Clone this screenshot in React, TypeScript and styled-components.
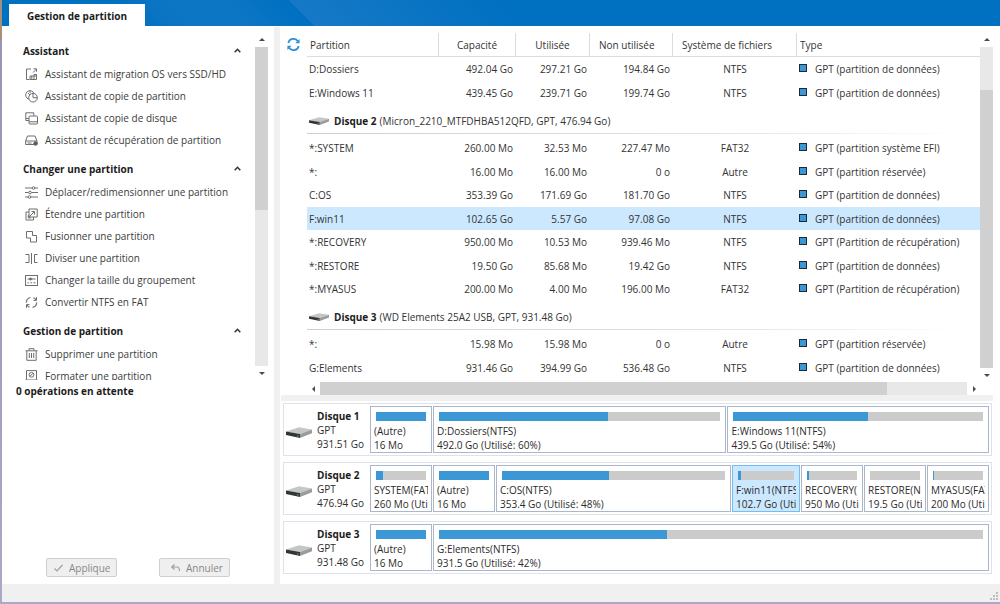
import React from 'react';
import styled, { createGlobalStyle } from 'styled-components';

const GlobalStyle = createGlobalStyle`
  *, *::before, *::after { box-sizing: border-box; }
  body {
    margin: 0;
    font-family: 'Open Sans', 'Noto Sans', sans-serif;
    font-size: 10px;
    line-height: 14px;
    color: #2b2b2b;
  }
  button { font: inherit; color: inherit; margin: 0; }
`;

const Frame = styled.div`
  display: flex;
  flex-direction: column;
  height: 100vh;
  min-height: 500px;
  padding: 0 0 2px 2px;
  background: linear-gradient(#a58f79 0 40px, #9a94b4 40px 60px, #a9a9c6 100%);
`;

const TitleBar = styled.header`
  display: flex;
  align-items: flex-end;
  flex: none;
  height: 26px;
  padding: 4px 0 0 7px;
  background:
    linear-gradient(45deg, transparent 18px, #1679c7 18px, transparent 170px) 287px 0 / 300px 26px no-repeat,
    linear-gradient(45deg, transparent 18px, #0d76c4 60px, #0d76c4 100px, transparent 140px) 105px 0 / 200px 26px no-repeat,
    #0070c0;
`;

const Tab = styled.button`
  width: 136px;
  height: 22px;
  padding: 2px 0 0;
  border: 0;
  background: #fff;
  font-weight: 700;
  color: #1c1c1c;
`;

const Body = styled.div`
  display: flex;
  flex: 1;
  min-height: 0;
  background: #fff;
`;

const Sidebar = styled.aside`
  display: flex;
  flex-direction: column;
  flex: none;
  width: 272px;
`;

const VSplitter = styled.div`
  flex: none;
  width: 6px;
  margin-top: 1px;
  background: #f0f0f0;
`;

const HSplitter = styled.div`
  flex: none;
  height: 6px;
  margin: 0 7px 0 1px;
  background: #f0f0f0;
`;

const ActionArea = styled.div`
  display: flex;
  flex: 1;
  min-height: 0;
  padding-right: 6px;
`;

const ActionList = styled.nav`
  flex: 1;
  padding-top: 7px;
  overflow: hidden;
`;

const SectionHead = styled.button`
  display: flex;
  align-items: center;
  justify-content: space-between;
  width: 100%;
  height: 24px;
  margin-top: 6px;
  padding: 0 14px 0 21px;
  border: 0;
  background: none;
  font-weight: 700;
  color: #1c1c1c;
  svg { margin-bottom: 2px; }
`;

const Action = styled.button`
  display: flex;
  align-items: center;
  gap: 7px;
  width: 100%;
  height: 22px;
  padding: 0 0 0 23px;
  border: 0;
  background: none;
  color: #3c3c3c;
  white-space: nowrap;
`;

const SideScroll = styled.div`
  display: flex;
  padding-top: 7px;
`;

const Bar = styled.div<{ $horizontal?: boolean }>`
  display: flex;
  flex-direction: ${p => (p.$horizontal ? 'row' : 'column')};
  flex: none;
  ${p => (p.$horizontal ? 'height: 13px;' : 'width: 13px;')}
`;

const BarEnd = styled.button`
  display: flex;
  align-items: center;
  justify-content: center;
  flex: none;
  width: 13px;
  height: 14px;
  padding: 0;
  border: 0;
  background: none;
  color: #4a4a4a;
`;

const Track = styled.div`
  display: flex;
  flex-direction: inherit;
  flex: 1;
  min-height: 0;
  background: #e8e8e8;
`;

const Thumb = styled.div<{ $size: number }>`
  flex: ${p => p.$size} 0 0;
  background: #d0d0d0;
`;

const Blank = styled.div<{ $size: number }>`
  flex: ${p => p.$size} 0 0;
`;

const Pending = styled.div`
  flex: none;
  display: flex;
  flex-direction: column;
  justify-content: space-between;
  height: 204px;
  padding: 4px 0 7px 14px;
  font-weight: 700;
  color: #1c1c1c;
`;

const PendingButtons = styled.div`
  display: flex;
  gap: 42px;
  padding-left: 30px;
`;

const PendingButton = styled.button`
  display: flex;
  align-items: center;
  gap: 6px;
  width: 71px;
  height: 19px;
  padding: 0 6px 0 7px;
  border: 1px solid #cfcfcf;
  border-radius: 2px;
  background: #efefef;
  font-weight: 400;
  &:disabled { color: #888; }
  svg { flex: none; }
`;

const ButtonText = styled.span`
  flex: 1;
  overflow: hidden;
  text-align: left;
`;

const Main = styled.main`
  display: flex;
  flex-direction: column;
  flex: 1;
  min-width: 0;
`;

const ListArea = styled.section`
  display: flex;
  flex: 1;
  min-height: 0;
  padding-right: 7px;
`;

const RefreshButton = styled.button`
  flex: none;
  align-self: flex-start;
  width: 27px;
  height: 22px;
  margin-top: 7px;
  padding: 0 0 0 7px;
  border: 0;
  background: none;
  svg { display: block; }
`;

const ListColumn = styled.div`
  display: flex;
  flex-direction: column;
  flex: 1;
  min-width: 0;
`;

const TableClip = styled.div`
  flex: 1;
  min-height: 0;
  padding-top: 7px;
  overflow: hidden;
`;

const ListScroll = styled.div`
  display: flex;
  flex: none;
  padding: 7px 0 13px;
`;

const Table = styled.table`
  width: 100%;
  table-layout: fixed;
  border-collapse: separate;
  border-spacing: 0;
  white-space: nowrap;
  color: #333;
  th, td { padding: 0; }
  tbody tr { height: 24px; }
  tbody + tbody tr:nth-child(odd) { height: 23px; }
`;

const Col = styled.col<{ $width?: number }>`
  ${p => (p.$width ? `width: ${p.$width}px;` : '')}
`;

const Head = styled.th<{ $align?: string; $pad?: number }>`
  height: 24px;
  font-weight: 400;
  text-align: ${p => p.$align || 'left'};
  border-bottom: 1px solid #dcdcdc;
  && { padding-left: ${p => p.$pad || 0}px; }
  & + & { border-left: 1px solid #dcdcdc; }
`;

const Row = styled.tr<{ $selected?: boolean }>`
  background: ${p => (p.$selected ? '#cce8ff' : 'transparent')};
`;

const NameCell = styled.td`
  && { padding-left: 2px; }
`;

const SizeCell = styled.td`
  text-align: right;
  && { padding-right: 2px; }
`;

const FsCell = styled.td`
  text-align: center;
  && { padding-left: 2px; }
`;

const TypeLabel = styled.div`
  display: flex;
  align-items: center;
  gap: 8px;
  padding-left: 3px;
  &::before {
    content: '';
    width: 8px;
    height: 8px;
    margin-bottom: 2px;
    border: 1px solid #1b2a36;
    background: #3c98d4;
  }
`;

const GroupHead = styled.th`
  height: 31px;
  font-weight: 400;
  text-align: left;
  vertical-align: top;
`;

const GroupLabel = styled.div`
  display: flex;
  align-items: center;
  height: 29px;
  padding: 2px 0 0 2px;
  background: linear-gradient(90deg, #cfcfcf, #e2e2e2 60%, transparent 98%) 0 100% / 100% 1px no-repeat;
  svg { margin-right: 5px; }
  b { margin-right: 3px; color: #1c1c1c; }
`;

const DiskMap = styled.section`
  display: flex;
  flex-direction: column;
  flex: none;
  gap: 6px;
  padding: 2px 8px 10px 3px;
`;

const DiskRow = styled.div`
  display: flex;
  height: 53px;
  padding: 2px;
  border: 1px solid #dfe2ea;
`;

const DiskInfo = styled.div`
  display: flex;
  align-items: center;
  flex: none;
  gap: 5px;
  width: 84px;
  white-space: nowrap;
  svg { margin-top: 5px; flex: none; }
  b { display: block; color: #1c1c1c; }
`;

const Partitions = styled.div`
  display: flex;
  flex: 1;
  gap: 1px;
  min-width: 0;
`;

const PartitionBox = styled.button<{ $width: number; $grow: number; $selected?: boolean }>`
  display: flex;
  flex-direction: column;
  flex: ${p => `${p.$grow} 0 ${p.$width}px`};
  min-width: 0;
  padding: 5px 3px 0;
  overflow: hidden;
  text-align: left;
  white-space: nowrap;
  border: 1px solid ${p => (p.$selected ? '#74bcf5' : '#aab7cb')};
  background: ${p => (p.$selected ? '#cce8ff' : '#fff')};
`;

const Usage = styled.span`
  display: block;
  align-self: stretch;
  flex: none;
  height: 9px;
  margin: 0 2px 3px;
  background: #cbcbcb;
`;

const UsageFill = styled.span`
  display: block;
  height: 100%;
  background: #3c98d4;
`;

const Line = styled.span`
  display: block;
  align-self: stretch;
  overflow: hidden;
`;

const StatusBar = styled.footer`
  display: flex;
  align-items: flex-end;
  justify-content: flex-end;
  flex: none;
  height: 18px;
  padding: 0 2px 2px 0;
  background: #f0f0f0;
`;

const ICONS: Record<string, React.ReactNode> = {
  migrate: <path d="M6 1H1.500v10.500h3M8 4.500L11.500 1M8.500 .8h3v3M5 11.500h6.500V6.500H9v5M6.800 11.500v-3.500H11.500M5 11.500V8h2" />,
  copyPart: <><circle cx="5" cy="5" r="4.300" /><circle cx="8" cy="7.700" r="4.300" fill="#fff" /><path d="M8 3.400v4.300h4.300M5 .7V3M5 5L3 3" /></>,
  copyDisk: <><path d="M4 8.500H.8V.8h8v3M.8 6.500H4" /><rect x="4" y="4" width="8.500" height="8" rx="1" /><path d="M4 9.800h8.500" /></>,
  recover: <><path d="M2.500 2h7.500l2 5v3.500H.6V7z" /><path d="M.6 7h11.400M2.500 9h4" /><circle cx="10.500" cy="9.500" r="1.800" fill="#555" /></>,
  resize: <><path d="M0 2h7M10 2h3M0 6.500h3.500M6.500 6.500H13M0 11h3M6 11h7" /><circle cx="8.500" cy="2" r="1.300" /><circle cx="5" cy="6.500" r="1.300" /><circle cx="4.500" cy="11" r="1.300" /></>,
  extend: <><path d="M4 4H1v8h7.500V9" /><path d="M4 1h8.200v8H4z" /><path d="M3.500 9.500l5.500-5.500M6.500 3.500h3v3M3.300 7.200v2.700h2.700" /></>,
  merge: <path d="M1.500 1.500h6v4h4v6.500h-6v-4h-4z" />,
  split: <path d="M6.500 1v11M.5 2.500H4v8H.5M12.500 2.500H9.500v8h3M.5 10.500h3.500" />,
  cluster: <><rect x=".5" y="1.500" width="12" height="10" /><path d="M2.500 5h8M2.500 8.800h1.500M5.500 8.800h1.500M8.500 8.800h2" /><circle cx="5.500" cy="5" r="1" fill="#666" /></>,
  convert: <><path d="M5.500 1.500Q1.500 2.500 1.300 6.500M11.700 6.500Q11.500 10.500 7.500 11.500" strokeWidth="1.200" /><path d="M4.500 11.300Q2.800 10.600 2 9M8.500 1.700Q10.200 2.400 11 4" strokeWidth="1.200" /><path d="M11.500 1.200v3.200H8.500M1.500 11.800V8.600h3" /></>,
  trash: <path d="M.5 2.800h12M4 2.500V.7h5v1.800M1.800 3v9.300h9.400V3M4.300 5v5M6.500 5v5M8.700 5v5" />,
  format: <><path d="M1.500 9V.6h10V9l.8 1.500v2H.7v-2zM1 10h11" /><circle cx="6.500" cy="4.800" r="2.400" /><path d="M5 6.300l3-3" /></>,
};

const Glyph = ({ name }: { name: string }) => (
  <svg width="13" height="13" viewBox="0 0 13 13" fill="none" stroke="#6e6e6e" strokeWidth="1" aria-hidden="true">
    {ICONS[name]}
  </svg>
);

const Chevron = () => (
  <svg width="7" height="5" viewBox="0 0 7 5" fill="none" stroke="#333" strokeWidth="1.500" aria-hidden="true">
    <path d="M.7 4.300L3.500 1.300l2.800 3" />
  </svg>
);

const ARROWS = {
  up: 'M0 4L3 1l3 3z',
  down: 'M0 2h6L3 5z',
  left: 'M4 0v6L1 3z',
  right: 'M2 0v6l3-3z',
};

const Arrow = ({ dir }: { dir: keyof typeof ARROWS }) => (
  <svg width="6" height="6" viewBox="0 0 6 6" fill="currentColor" aria-hidden="true">
    <path d={ARROWS[dir]} />
  </svg>
);

const DiskIcon = ({ width, height }: { width: number; height: number }) => (
  <svg width={width} height={height} viewBox="0 0 26 11" preserveAspectRatio="none" aria-hidden="true">
    <path d="M0 4.500L13 .3 26 2.500 14 7z" fill="#c6c6c6" />
    <path d="M0 4.500L14 7v4L0 8z" fill="#333634" />
    <path d="M14 7l12-4.500v3.800L14 11z" fill="#9b9b9b" />
    <path d="M11 8.200l1.500.3v1.300L11 9.500z" fill="#3fae4c" />
  </svg>
);

const RefreshIcon = () => (
  <svg width="13" height="13" viewBox="0 0 13 13" fill="none" stroke="#2f8fd8" strokeWidth="1.700" aria-hidden="true">
    <path d="M1.300 5A5.200 5.200 0 0 1 10.800 3.300M11.700 8A5.200 5.200 0 0 1 2.200 9.700" />
    <path d="M12.600 1v4.300H8.300zM.4 12V7.700h4.300z" fill="#2f8fd8" stroke="none" />
  </svg>
);

const sections = [
  {
    title: 'Assistant',
    items: [
      ['migrate', 'Assistant de migration OS vers SSD/HD'],
      ['copyPart', 'Assistant de copie de partition'],
      ['copyDisk', 'Assistant de copie de disque'],
      ['recover', 'Assistant de récupération de partition'],
    ],
  },
  {
    title: 'Changer une partition',
    items: [
      ['resize', 'Déplacer/redimensionner une partition'],
      ['extend', 'Étendre une partition'],
      ['merge', 'Fusionner une partition'],
      ['split', 'Diviser une partition'],
      ['cluster', 'Changer la taille du groupement'],
      ['convert', 'Convertir NTFS en FAT'],
    ],
  },
  {
    title: 'Gestion de partition',
    items: [
      ['trash', 'Supprimer une partition'],
      ['format', 'Formater une partition'],
    ],
  },
];

const DATA = 'GPT (partition de données)';
const RESERVED = 'GPT (partition réservée)';
const RECOVERY = 'GPT (Partition de récupération)';

type Group = { disk?: string; detail?: string; rows: string[][] };

const groups: Group[] = [
  {
    rows: [
      ['D:Dossiers', '492.04 Go', '297.21 Go', '194.84 Go', 'NTFS', DATA],
      ['E:Windows 11', '439.45 Go', '239.71 Go', '199.74 Go', 'NTFS', DATA],
    ],
  },
  {
    disk: 'Disque 2',
    detail: '(Micron_2210_MTFDHBA512QFD, GPT, 476.94 Go)',
    rows: [
      ['*:SYSTEM', '260.00 Mo', '32.53 Mo', '227.47 Mo', 'FAT32', 'GPT (partition système EFI)'],
      ['*:', '16.00 Mo', '16.00 Mo', '0 o', 'Autre', RESERVED],
      ['C:OS', '353.39 Go', '171.69 Go', '181.70 Go', 'NTFS', DATA],
      ['F:win11', '102.65 Go', '5.57 Go', '97.08 Go', 'NTFS', DATA],
      ['*:RECOVERY', '950.00 Mo', '10.53 Mo', '939.46 Mo', 'NTFS', RECOVERY],
      ['*:RESTORE', '19.50 Go', '85.68 Mo', '19.42 Go', 'NTFS', DATA],
      ['*:MYASUS', '200.00 Mo', '4.00 Mo', '196.00 Mo', 'FAT32', RECOVERY],
    ],
  },
  {
    disk: 'Disque 3',
    detail: '(WD Elements 25A2 USB, GPT, 931.48 Go)',
    rows: [
      ['*:', '15.98 Mo', '15.98 Mo', '0 o', 'Autre', RESERVED],
      ['G:Elements', '931.46 Go', '394.99 Go', '536.48 Go', 'NTFS', DATA],
    ],
  },
];

type Part = { name: string; size: string; used: number; width?: number; grow?: number };

const disks: { name: string; size: string; parts: Part[] }[] = [
  {
    name: 'Disque 1',
    size: '931.51 Go',
    parts: [
      { name: '(Autre)', size: '16 Mo', used: 100 },
      { name: 'D:Dossiers(NTFS)', size: '492.0 Go (Utilisé: 60%)', used: 60, width: 200, grow: 94 },
      { name: 'E:Windows 11(NTFS)', size: '439.5 Go (Utilisé: 54%)', used: 54, width: 180, grow: 82 },
    ],
  },
  {
    name: 'Disque 2',
    size: '476.94 Go',
    parts: [
      { name: 'SYSTEM(FAT', size: '260 Mo (Uti', used: 13 },
      { name: '(Autre)', size: '16 Mo', used: 100 },
      { name: 'C:OS(NTFS)', size: '353.4 Go (Utilisé: 48%)', used: 48, width: 150, grow: 1 },
      { name: 'F:win11(NTFS', size: '102.7 Go (Uti', used: 6, width: 68 },
      { name: 'RECOVERY(', size: '950 Mo (Uti', used: 3 },
      { name: 'RESTORE(N', size: '19.5 Go (Uti', used: 0 },
      { name: 'MYASUS(FAT', size: '200 Mo (Uti', used: 2 },
    ],
  },
  {
    name: 'Disque 3',
    size: '931.48 Go',
    parts: [
      { name: '(Autre)', size: '16 Mo', used: 100 },
      { name: 'G:Elements(NTFS)', size: '931.5 Go (Utilisé: 42%)', used: 42, width: 150, grow: 1 },
    ],
  },
];

type ScrollBarProps = { horizontal?: boolean; before: number; size: number; after: number };

const ScrollBar = ({ horizontal, before, size, after }: ScrollBarProps) => (
  <Bar $horizontal={horizontal}>
    <BarEnd aria-label={horizontal ? 'Gauche' : 'Haut'}><Arrow dir={horizontal ? 'left' : 'up'} /></BarEnd>
    <Track>
      <Blank $size={before} />
      <Thumb $size={size} />
      <Blank $size={after} />
    </Track>
    <BarEnd aria-label={horizontal ? 'Droite' : 'Bas'}><Arrow dir={horizontal ? 'right' : 'down'} /></BarEnd>
  </Bar>
);

export default function App() {
  return (
    <Frame>
      <GlobalStyle />
      <TitleBar>
        <Tab>Gestion de partition</Tab>
      </TitleBar>
      <Body>
        <Sidebar>
          <ActionArea>
            <ActionList>
              {sections.map(s => (
                <React.Fragment key={s.title}>
                  <SectionHead>{s.title}<Chevron /></SectionHead>
                  {s.items.map(([icon, label]) => (
                    <Action key={label}><Glyph name={icon} />{label}</Action>
                  ))}
                </React.Fragment>
              ))}
            </ActionList>
            <SideScroll>
              <ScrollBar before={0} size={163} after={156} />
            </SideScroll>
          </ActionArea>
          <Pending>
            0 opérations en attente
            <PendingButtons>
              <PendingButton disabled>
                <svg width="9" height="8" viewBox="0 0 9 8" fill="none" stroke="#a0a0a0" strokeWidth="1.200" aria-hidden="true">
                  <path d="M.5 4.500l2.500 2.500L8.500 1" />
                </svg>
                <ButtonText>Appliquer</ButtonText>
              </PendingButton>
              <PendingButton disabled>
                <svg width="13" height="8" viewBox="-4 0 13 8" fill="none" stroke="#a0a0a0" strokeWidth="1.200" aria-hidden="true">
                  <path d="M3.500 .5L.8 3l2.700 2.500M1 3h5.500q2 .3 2 4" />
                </svg>
                <ButtonText>Annuler</ButtonText>
              </PendingButton>
            </PendingButtons>
          </Pending>
        </Sidebar>
        <VSplitter />
        <Main>
          <ListArea>
            <RefreshButton aria-label="Actualiser"><RefreshIcon /></RefreshButton>
            <ListColumn>
              <TableClip>
                <Table>
                  <colgroup>
                    <Col $width={131} />
                    <Col $width={77} />
                    <Col $width={74} />
                    <Col $width={83} />
                    <Col $width={124} />
                    <Col />
                  </colgroup>
                  <thead>
                    <tr>
                      <Head $pad={3}>Partition</Head>
                      <Head $align="center">Capacité</Head>
                      <Head $align="center">Utilisée</Head>
                      <Head $pad={9}>Non utilisée</Head>
                      <Head $pad={9}>Système de fichiers</Head>
                      <Head $pad={3}>Type</Head>
                    </tr>
                  </thead>
                  {groups.map((g, i) => (
                    <tbody key={i}>
                      {g.disk && (
                        <tr>
                          <GroupHead colSpan={6} scope="rowgroup">
                            <GroupLabel>
                              <DiskIcon width={20} height={8} />
                              <b>{g.disk}</b>{g.detail}
                            </GroupLabel>
                          </GroupHead>
                        </tr>
                      )}
                      {g.rows.map(r => (
                        <Row key={r[0]} $selected={r[0] === 'F:win11'}>
                          <NameCell>{r[0]}</NameCell>
                          <SizeCell>{r[1]}</SizeCell>
                          <SizeCell>{r[2]}</SizeCell>
                          <SizeCell>{r[3]}</SizeCell>
                          <FsCell>{r[4]}</FsCell>
                          <td><TypeLabel>{r[5]}</TypeLabel></td>
                        </Row>
                      ))}
                    </tbody>
                  ))}
                </Table>
              </TableClip>
              <ScrollBar horizontal before={0} size={566} after={80} />
            </ListColumn>
            <ListScroll>
              <ScrollBar before={43} size={278} after={0} />
            </ListScroll>
          </ListArea>
          <HSplitter />
          <DiskMap>
            {disks.map(d => (
              <DiskRow key={d.name}>
                <DiskInfo>
                  <DiskIcon width={26} height={11} />
                  <div><b>{d.name}</b>GPT<br />{d.size}</div>
                </DiskInfo>
                <Partitions>
                  {d.parts.map(p => (
                    <PartitionBox key={p.name} $width={p.width || 62} $grow={p.grow || 0} $selected={p.name.startsWith('F:')}>
                      <Usage><UsageFill style={{ width: `${p.used}%` }} /></Usage>
                      <Line>{p.name}</Line>
                      <Line>{p.size}</Line>
                    </PartitionBox>
                  ))}
                </Partitions>
              </DiskRow>
            ))}
          </DiskMap>
        </Main>
      </Body>
      <StatusBar>
        <svg width="8" height="8" viewBox="0 0 8 8" fill="#bdbdbd" aria-hidden="true">
          <path d="M6 0h2v2H6zM6 3h2v2H6zM6 6h2v2H6zM3 3h2v2H3zM3 6h2v2H3zM0 6h2v2H0z" />
        </svg>
      </StatusBar>
    </Frame>
  );
}
